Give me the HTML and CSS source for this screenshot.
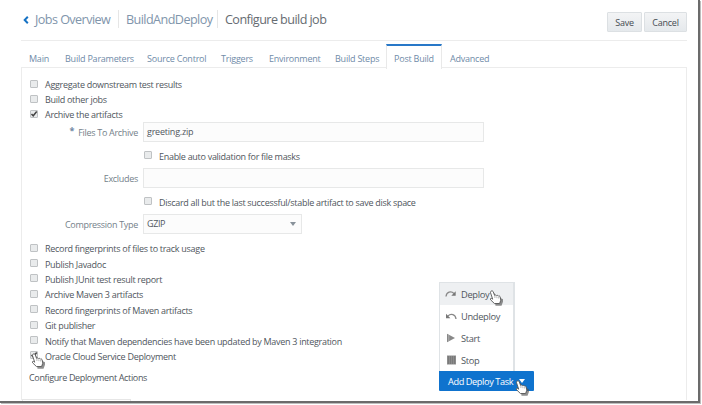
FILE: index.html
```html
<!DOCTYPE html>
<html lang="en">
<head>
<meta charset="utf-8">
<title>Configure build job</title>
<link rel="stylesheet" href="styles.css">
</head>
<body>
<svg class="defs" width="0" height="0" aria-hidden="true">
  <symbol id="hand" viewBox="0 0 14 16">
    <path d="M5 14.5h6l1.500-4V8L8.500 6 6 6.500 4 2 2.500 2.500 4 8z" fill="#555" opacity=".65" transform="translate(1.500 1.200)"/>
    <path d="M2 1.200C3 .4 4 1 4.300 2l1.300 3.400c.8-.7 1.500-.4 2 .3.7-.6 1.400-.3 1.900.4.8-.4 1.500 0 1.700.9l.6 3.200-1.200 3.300H5.400L1.600 9.800c-.8-1.200.5-1.900 1.300-1.200l.8.6L1.500 2.700c-.2-.6 0-1.200.5-1.500z" fill="#fff" stroke="#555" stroke-width=".9"/>
    <path d="M5.900 6v2M7.900 6.500v1.700M9.700 7v1.500" stroke="#888" stroke-width=".6"/>
  </symbol>
</svg>
<div class="window">
  <header class="header">
    <svg class="back" viewBox="0 0 6 8"><path d="M4.800 .8 1.700 4l3.100 3.200" fill="none" stroke="#1672c4" stroke-width="2"/></svg>
    <nav class="crumbs">
      <a class="crumb crumb-jobs">Jobs Overview</a>
      <a class="crumb crumb-name">BuildAndDeploy</a>
      <span class="crumb crumb-current">Configure build job</span>
    </nav>
    <div class="actions"><button class="btn save">Save</button><button class="btn cancel">Cancel</button></div>
  </header>
  <nav class="tabs">
    <a class="tab">Main</a>
    <a class="tab">Build Parameters</a>
    <a class="tab">Source Control</a>
    <a class="tab">Triggers</a>
    <a class="tab">Environment</a>
    <a class="tab">Build Steps</a>
    <a class="tab active">Post Build</a>
    <a class="tab">Advanced</a>
  </nav>
  <main class="panel">
    <div class="list">
      <label class="row"><i class="box"></i><span>Aggregate downstream test results</span></label>
      <label class="row"><i class="box"></i><span>Build other jobs</span></label>
      <label class="row"><i class="box"><svg viewBox="0 0 8 8"><path d="M1.500 4 3.200 5.800 6.700 1.500" fill="none" stroke="#444" stroke-width="1.500"/></svg></i><span>Archive the artifacts</span></label>
    </div>
    <div class="form">
      <div class="label files"><b>*</b>Files To Archive</div>
      <div class="field">greeting.zip</div>
      <label class="row sub"><i class="box"></i><span>Enable auto validation for file masks</span></label>
      <div class="label">Excludes</div>
      <div class="field"></div>
      <label class="row sub"><i class="box"></i><span>Discard all but the last successful/stable artifact to save disk space</span></label>
      <div class="label">Compression Type</div>
      <div class="field select">GZIP<svg viewBox="0 0 6 4"><path d="M0 0h6L3 4z" fill="#88919a"/></svg></div>
    </div>
    <div class="list more">
      <label class="row"><i class="box"></i><span>Record fingerprints of files to track usage</span></label>
      <label class="row"><i class="box"></i><span>Publish Javadoc</span></label>
      <label class="row"><i class="box"></i><span>Publish JUnit test result report</span></label>
      <label class="row"><i class="box"></i><span>Archive Maven 3 artifacts</span></label>
      <label class="row"><i class="box"></i><span>Record fingerprints of Maven artifacts</span></label>
      <label class="row"><i class="box"></i><span>Git publisher</span></label>
      <label class="row notify"><i class="box"></i><span>Notify that Maven dependencies have been updated by Maven 3 integration</span></label>
      <label class="row"><i class="box"><svg viewBox="0 0 8 8"><path d="M1.500 4 3.200 5.800 6.700 1.500" fill="none" stroke="#444" stroke-width="1.500"/></svg></i><span>Oracle Cloud Service Deployment</span></label>
    </div>
    <div class="configure">Configure Deployment Actions</div>
    <div class="next"></div>
  </main>
</div>
<div class="deploy">
  <div class="menu">
    <div class="item hover"><svg viewBox="0 0 12 10"><path d="M1 7.500C1.500 3 6 1.500 9 4.500" fill="none" stroke="#888" stroke-width="1.300"/><path d="M10.700 2.200v4.600H6.300z" fill="#777"/></svg>Deploy</div>
    <div class="item"><svg viewBox="0 0 12 10"><path d="M11 8C10.500 3.500 6 2 3 5" fill="none" stroke="#888" stroke-width="1.300"/><path d="M1 2.700v4.600h4.400z" fill="#777"/></svg>Undeploy</div>
    <div class="item"><svg viewBox="0 0 12 10"><path d="M2 .8 10 5 2 9.200z" fill="#888"/><path d="M3.800 2v6" stroke="#bbb" stroke-width=".8"/></svg>Start</div>
    <div class="item"><svg viewBox="0 0 12 10"><path d="M2 .5h9v9H2z" fill="#8c8c8c"/><path d="M3 2h7M3 4h7M3 6h7M3 8h7" stroke="#606060" stroke-width=".8" stroke-dasharray="1 1"/></svg>Stop</div>
  </div>
  <button class="add">Add Deploy Task<svg viewBox="0 0 6 4"><path d="M0 0h6L3 4z" fill="#fff"/></svg></button>
</div>
<svg class="hand hand-check"><use href="#hand"/></svg>
<svg class="hand hand-deploy"><use href="#hand"/></svg>
<svg class="hand hand-add"><use href="#hand"/></svg>
</body>
</html>
```
FILE: styles.css
```css
* { box-sizing: border-box; }
body {
  margin: 0;
  width: 702px;
  height: 405px;
  overflow: hidden;
  background: #fff;
  font: 9px/15px "Open Sans", "Noto Sans", sans-serif;
  letter-spacing: -0.22px;
  color: #4f565d;
  white-space: nowrap;
}
.defs, .hand { position: absolute; }
.window {
  width: 700px;
  height: 403px;
  padding: 0 12px 0 21px;
  border-right: 2px solid #6b6b6b;
  border-bottom: 2px solid #6b6b6b;
  box-shadow: 1px 1px 0 #bdbdbd;
  overflow: hidden;
}
.header {
  display: flex;
  height: 41px;
  width: 666px;
  border-bottom: 1px solid #ececec;
}
.back { width: 6px; height: 8px; margin: 16px 0 0 2px; }
.crumbs { display: flex; padding-top: 10px; font-size: 12.600px; line-height: 20px; letter-spacing: -0.56px; color: #7f95ab; }
.crumb { padding-left: 6px; height: 18px; }
.crumb-jobs { width: 89px; }
.crumb-name { width: 99px; padding-left: 7px; border-left: 1px solid #e6e6e6; }
.crumb-current { padding-left: 7px; border-left: 1px solid #e6e6e6; color: #666b71; }
.actions { display: flex; gap: 2px; margin: 12px 0 0 auto; height: 20px; }
.btn {
  padding: 0;
  border: 1px solid #dce0e3;
  border-radius: 1px;
  background: linear-gradient(#f3f4f5, #e5e9ec);
  font: inherit;
  letter-spacing: inherit;
  color: #454b51;
}
.save { width: 35px; }
.cancel { width: 43px; }
.tabs {
  display: grid;
  grid-template-columns: 36px 82px 74px 48px 66px 59px 56px 60px;
  height: 27px;
  padding-top: 3px;
  color: #6f8ba8;
}
.tab { padding: 7px 0 0 8px; }
.tab.active {
  height: 25px;
  padding: 4px 0 0 7px;
  border: 1px solid #e9e9e9;
  border-top: 2px solid #2878c8;
  border-bottom: 0;
  background: #fff;
  padding-top: 5px;
  z-index: 1;
}
.panel {
  width: 666px;
  height: 333px;
  margin-top: -1px;
  padding-top: 9px;
  border: 1px solid #ececec;
  border-bottom: 0;
}
.list { padding-left: 8px; }
.row { display: flex; height: 15px; align-items: center; letter-spacing: -0.29px; }
.row.notify { letter-spacing: -0.3px; }
.box {
  width: 8px;
  height: 8px;
  margin: -2px 7px 0 0;
  border: 1px solid #bfc2c4;
  border-radius: 1px;
  background: #e9ebec;
}
.box svg { display: block; width: 8px; height: 8px; margin: -1px; }
.form {
  display: grid;
  grid-template-columns: 116px 1fr;
  grid-template-rows: 20px 26px 20px 26px 20px;
  column-gap: 5px;
  align-items: center;
}
.label { text-align: right; color: #747f8a; letter-spacing: -0.3px; }
.label b { margin-right: 4px; color: #7189a3; position: relative; top: -2px; }
.field {
  width: 341px;
  height: 20px;
  padding-left: 3px;
  border: 1px solid #e7e8e8;
  background: #fcfcfc;
  line-height: 18px;
}
.row.sub { grid-column: 2; padding: 2px 0 0 1px; }
.field.select { display: flex; width: 159px; align-items: center; justify-content: space-between; padding-right: 5px; letter-spacing: -0.4px; }
.select svg { width: 6px; height: 4px; }
.more { margin-top: 7px; }
.more .row { height: 15.400px; }
.configure { margin: 6px 0 0 7px; letter-spacing: -0.35px; }
.next { width: 109px; height: 3px; margin-top: 14px; border: 1px solid #e6e6e6; border-bottom: 0; }
.deploy { position: absolute; left: 439px; top: 282px; width: 95px; }
.menu { width: 76px; height: 89px; border: 1px solid #dfe3e6; border-right-width: 2px; border-bottom: 0; background: #fff; }
.item { display: flex; align-items: center; height: 22px; padding-left: 5px; font-size: 9.300px; letter-spacing: -0.33px; }
.item.hover { background: #eef0f2; }
.item svg { width: 12px; height: 10px; margin-right: 4px; }
.add {
  display: flex;
  width: 95px;
  height: 20px;
  padding: 0 9px;
  border: 0;
  border-radius: 0 1px 1px 1px;
  align-items: center;
  justify-content: space-between;
  background: #0f73ce;
  font: inherit;
  font-size: 9.200px;
  letter-spacing: -0.4px;
  color: #fff;
}
.add svg { width: 6px; height: 4px; }
.hand { width: 14px; height: 16px; }
.hand-check { left: 31px; top: 353px; }
.hand-deploy { left: 489px; top: 290px; }
.hand-add { left: 515px; top: 380px; }
```
